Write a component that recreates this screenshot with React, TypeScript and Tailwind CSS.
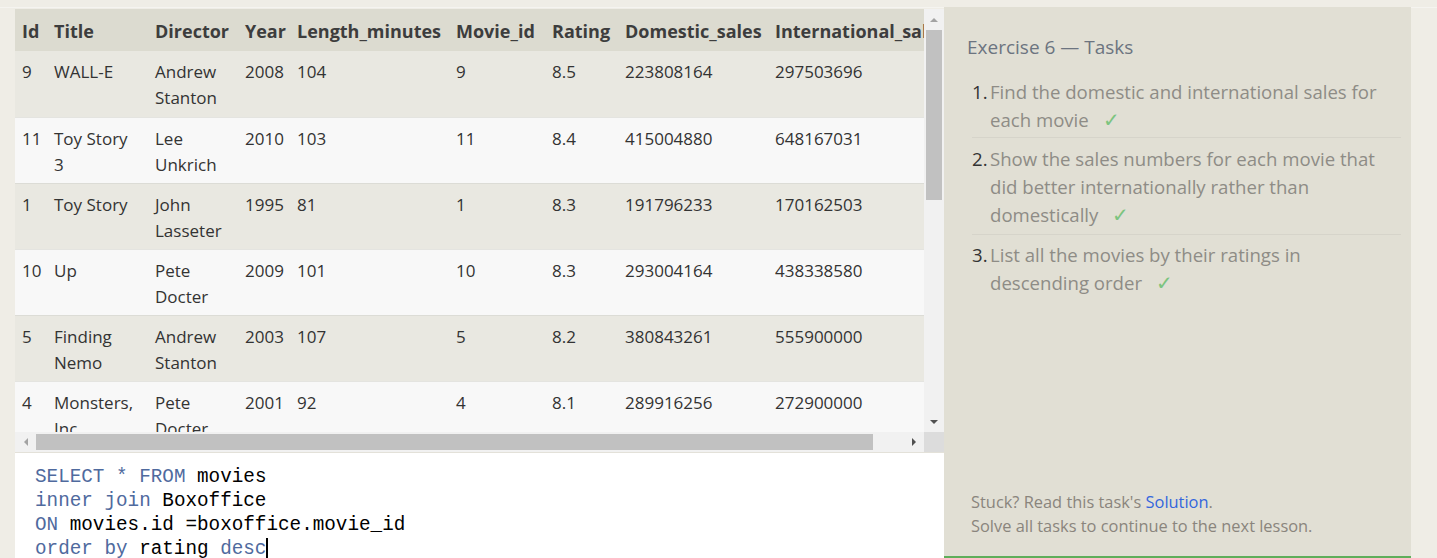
import React from "react";

const rows = [
  ["9", "WALL-E", "Andrew Stanton", "2008", "104", "9", "8.5", "223808164", "297503696"],
  ["11", "Toy Story 3", "Lee Unkrich", "2010", "103", "11", "8.4", "415004880", "648167031"],
  ["1", "Toy Story", "John Lasseter", "1995", "81", "1", "8.3", "191796233", "170162503"],
  ["10", "Up", "Pete Docter", "2009", "101", "10", "8.3", "293004164", "438338580"],
  ["5", "Finding Nemo", "Andrew Stanton", "2003", "107", "5", "8.2", "380843261", "555900000"],
  ["4", "Monsters, Inc.", "Pete Docter", "2001", "92", "4", "8.1", "289916256", "272900000"],
  ["8", "Ratatouille", "Brad Bird", "2007", "115", "8", "8", "206445654", "417277164"],
  ["6", "The Incredibles", "Brad Bird", "2004", "116", "6", "8", "261441092", "370001000"],
];

const headers = ["Id", "Title", "Director", "Year", "Length_minutes", "Movie_id", "Rating", "Domestic_sales", "International_sales"];
const widths = [32, 101, 90, 52, 159, 96, 73, 150, 190];

function Check() {
  return <span className="ml-[14px] text-[20px] leading-[20px] text-[#7cc47f]">✓</span>;
}

export default function App() {
  return (
    <div className="w-[1437px] h-[558px] overflow-hidden bg-[#efede6]" style={{ fontFamily: "'Open Sans', sans-serif" }}>
      <div className="h-[8px] border-b border-[#f5f4f0] bg-[#efede6]" />
      <div className="flex pl-[15px] h-[550px]">
        {/* Left column */}
        <div className="w-[929px] flex flex-col pt-[1px]">
          <div className="grid grid-cols-[909px_20px] grid-rows-[423px_20px]">
            <div className="overflow-hidden bg-[#f8f8f8]">
              <table className="table-fixed border-collapse text-[17px] text-[#333] w-[943px]">
                <colgroup>
                  {widths.map((w, i) => (
                    <col key={i} style={{ width: w }} />
                  ))}
                </colgroup>
                <thead>
                  <tr className="h-[42px] bg-[#dcdbd0]">
                    {headers.map((h) => (
                      <th key={h} className="text-left text-[18px] font-bold pl-[7px] pr-0 pt-[1px] whitespace-nowrap overflow-hidden text-[#3d3d3d] leading-[26px]">
                        {h}
                      </th>
                    ))}
                  </tr>
                </thead>
                <tbody>
                  {rows.map((r, i) => (
                    <tr key={i} className={`h-[66px] ${i % 2 === 0 ? "bg-[#e9e8e1]" : "bg-[#f8f8f8] border-t border-[#e4e4e0]"} ${i > 0 && i % 2 === 0 ? "border-t border-[#dcdcd6]" : ""}`}>
                      {r.map((c, j) => (
                        <td key={j} className="align-top pl-[7px] pt-[8px] pb-[5px] pr-[12px] leading-[26px]">
                          {c}
                        </td>
                      ))}
                    </tr>
                  ))}
                </tbody>
              </table>
            </div>
            {/* vertical scrollbar */}
            <div className="bg-[#f1f1f1] flex flex-col">
              <div className="h-[21px] flex items-center justify-center">
                <div className="w-0 h-0 border-l-[4px] border-r-[4px] border-b-[4px] border-l-transparent border-r-transparent border-b-[#a3a3a3]" />
              </div>
              <div className="flex-1 px-[2px]">
                <div className="h-[170px] bg-[#c1c1c1]" />
              </div>
              <div className="h-[21px] flex items-center justify-center">
                <div className="w-0 h-0 border-l-[4px] border-r-[4px] border-t-[4px] border-l-transparent border-r-transparent border-t-[#505050]" />
              </div>
            </div>
            {/* horizontal scrollbar */}
            <div className="bg-[#f1f1f1] flex items-center">
              <div className="w-[21px] h-full flex items-center justify-center">
                <div className="w-0 h-0 border-t-[4px] border-b-[4px] border-r-[4px] border-t-transparent border-b-transparent border-r-[#a3a3a3]" />
              </div>
              <div className="flex-1 py-[2px] h-full">
                <div className="w-[837px] h-full bg-[#c1c1c1]" />
              </div>
              <div className="w-[21px] h-full flex items-center justify-center">
                <div className="w-0 h-0 border-t-[4px] border-b-[4px] border-l-[4px] border-t-transparent border-b-transparent border-l-[#505050]" />
              </div>
            </div>
            <div className="bg-[#dcdcdc]" />
          </div>
          <div className="flex-1 bg-white border-t border-[#e3e1d9] pl-[20px] pt-[12px] text-[19.3px] leading-[24px] text-black" style={{ fontFamily: "'Liberation Mono', monospace" }}>
            <div><span className="text-[#4f6a9e]">SELECT</span> <span className="text-[#4f6a9e]">*</span> <span className="text-[#4f6a9e]">FROM</span> movies</div>
            <div><span className="text-[#4f6a9e]">inner</span> <span className="text-[#4f6a9e]">join</span> Boxoffice</div>
            <div><span className="text-[#4f6a9e]">ON</span> movies.id =boxoffice.movie_id</div>
            <div className="flex items-center"><span className="text-[#4f6a9e] whitespace-pre">order by</span><span className="whitespace-pre"> rating </span><span className="text-[#4f6a9e]">desc</span><span className="inline-block w-[2px] h-[22px] bg-black" /></div>
          </div>
        </div>
        {/* Right panel */}
        <div className="w-[467px] bg-[#e1dfd4] flex flex-col border-b-2 border-[#5fae5a] -mt-[1px]">
          <div className="pl-[23px] pt-[28px] text-[19px] leading-[24px] text-[#6c7480]">Exercise 6 — Tasks</div>
          <ol className="mt-[19px] pl-[28px] pr-[10px] text-[18.6px] leading-[28px] text-[#8e8c86]">
            <li className="flex border-b border-[#d6d4ca] pb-[3px]">
              <span className="w-[18px] shrink-0 text-[#333]">1.</span>
              <span>Find the domestic and international sales for each movie<Check /></span>
            </li>
            <li className="flex border-b border-[#d6d4ca] pt-[7px] pb-[5px]">
              <span className="w-[18px] shrink-0 text-[#333]">2.</span>
              <span>Show the sales numbers for each movie that did better internationally rather than domestically<Check /></span>
            </li>
            <li className="flex pt-[6px]">
              <span className="w-[18px] shrink-0 text-[#333]">3.</span>
              <span className="pr-[80px]">List all the movies by their ratings in descending order<Check /></span>
            </li>
          </ol>
          <div className="mt-auto pl-[27px] pb-[18px] text-[16.4px] leading-[24px] text-[#8a857d]">
            <div>Stuck? Read this task's <span className="text-[#3366dd]">Solution</span>.</div>
            <div>Solve all tasks to continue to the next lesson.</div>
          </div>
        </div>
      </div>
    </div>
  );
}
